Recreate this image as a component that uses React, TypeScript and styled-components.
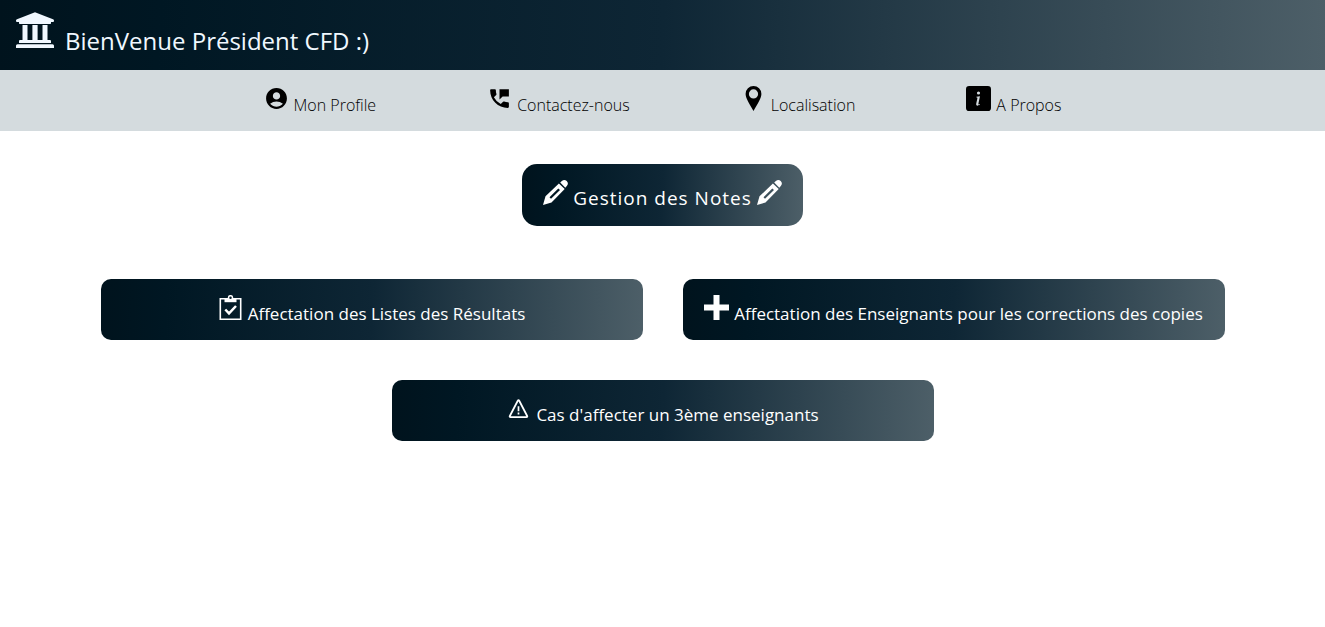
import React from "react";
import styled, { createGlobalStyle } from "styled-components";
import { MdAccountCircle, MdPermPhoneMsg } from "react-icons/md";
import { BsInfoSquareFill } from "react-icons/bs";

const GlobalStyle = createGlobalStyle`
  *, *::before, *::after { box-sizing: border-box; }
  body {
    margin: 0;
    background: #fff;
    color: #001018;
    font-family: "Segoe UI", "Open Sans", "Noto Sans", sans-serif;
  }
`;

const night =
  "linear-gradient(92deg, #00131d 0%, #001723 12%, #0e2635 50%, #4d5f68 100%)";

const Header = styled.header`
  display: flex;
  align-items: flex-start;
  gap: 11px;
  height: 70px;
  padding: 12px 16px;
  background: ${night};
  color: aliceblue;
`;

const Title = styled.h1`
  margin: 0;
  padding-top: 12px;
  font-size: 24px;
  line-height: 34px;
  font-weight: 400;
`;

const Nav = styled.nav`
  display: flex;
  justify-content: center;
  gap: 111px;
  height: 61px;
  padding-top: 16px;
  background: #d4dbde;
`;

const NavLink = styled.a`
  display: flex;
  align-items: flex-start;
  gap: 5px;
  color: #000;
  font-size: 16px;
  line-height: 20px;
  font-weight: 300;
  text-decoration: none;

  span { padding-top: 9px; }
`;

const Main = styled.main`
  display: flex;
  flex-direction: column;
  align-items: center;
  padding: 33px 16px;
`;

const Banner = styled.h2`
  display: flex;
  align-items: flex-start;
  gap: 5px;
  height: 62px;
  margin: 0 0 53px;
  padding: 16px 21px;
  border-radius: 15px;
  background: ${night};
  color: #fff;
  font-size: 19px;
  line-height: 26px;
  font-weight: 400;
  letter-spacing: 1px;

  span { padding-top: 5px; }
`;

const Actions = styled.div`
  display: flex;
  flex-wrap: wrap;
  justify-content: center;
  gap: 40px;
  width: 100%;
`;

const ActionButton = styled.button`
  display: flex;
  justify-content: center;
  align-items: flex-start;
  gap: 5px;
  width: 542px;
  max-width: 100%;
  height: 61px;
  padding: 16px;
  border: 0;
  border-radius: 10px;
  background: ${night};
  color: #fff;
  font-family: inherit;
  font-size: 17px;
  line-height: 24px;
  cursor: pointer;

  span { padding-top: 7px; }
`;

const BankIcon = () => (
  <svg width="38" height="38" viewBox="0 0 38 38" fill="currentColor" aria-hidden="true">
    <path d="M19 0.300L37 7.200q1 .4 1 1.300v.6q0 .9-1 .9H1q-1 0-1-.9v-.6q0-.9 1-1.300z" />
    <path d="M3 9.500h32v1.800q0 .7-.7.700H3.700q-.7 0-.7-.7zM6.500 13h5v15.500h-5zM16.400 13h5.200v15.500h-5.200zM26.500 13h5v15.500h-5zM4 28h30q1 0 1 1v2H3v-2q0-1 1-1zM1.500 32.200h35q1.500 0 1.500 1.500V36H0v-2.300q0-1.500 1.500-1.500z" />
  </svg>
);

const PinIcon = () => (
  <svg width="25" height="25" viewBox="0 0 25 25" fill="currentColor" aria-hidden="true">
    <path fillRule="evenodd" d="M12.500 0a7.900 7.900 0 0 1 7.900 7.900c0 4.600-4.700 11-7.900 17.100c-3.200-6.100-7.900-12.500-7.900-17.100a7.900 7.900 0 0 1 7.900-7.900zm0 3.300a4.600 4.600 0 1 0 0 9.200a4.600 4.600 0 0 0 0-9.200z" />
  </svg>
);

const PencilIcon = () => (
  <svg width="25" height="25" viewBox="0 0 25 25" fill="currentColor" aria-hidden="true">
    <path fillRule="evenodd" d="M15.900 3.500l5.800 5.600L8.500 22.500L0 25l2.500-8.700zM15.300 8.400L6.500 17.200l1.500 1.500L17 9.900z" />
    <path d="M17.200 2.500l1.700-1.500c1.500-1.400 3.500-1.200 4.800 0c1.500 1.500 1.600 3.500.1 5l-1.500 1.700z" />
  </svg>
);

const ClipboardIcon = () => (
  <svg width="25" height="25" viewBox="0 0 25 25" fill="none" stroke="currentColor" aria-hidden="true">
    <path strokeWidth="1.600" d="M2.300 3.700h20.400v20.500H2.300z" />
    <path fill="currentColor" stroke="none" d="M6.500 3.500h12v3.700h-12z" />
    <circle cx="12.500" cy="2.700" r="2" strokeWidth="1.500" fill="#0a202d" />
    <path strokeWidth="2.500" d="M7.300 14.500l3.700 3.900l7-7.400" />
  </svg>
);

const PlusIcon = () => (
  <svg width="25" height="25" viewBox="0 0 25 25" fill="currentColor" aria-hidden="true">
    <path d="M9.500 0h6v9.500H25v6h-9.500V25h-6v-9.500H0v-6h9.500z" />
  </svg>
);

const WarningIcon = () => (
  <svg width="25" height="25" viewBox="0 0 25 25" fill="none" stroke="currentColor" strokeLinejoin="round" aria-hidden="true">
    <path strokeWidth="1.900" d="M11.700 4.900q.8-1.300 1.600 0L21.100 19.900q.5 1.200-.7 1.200H4.600q-1.200 0-.7-1.200z" />
    <path strokeWidth="1.700" d="M12.500 10.300v5M12.500 16.600v1.900" />
  </svg>
);

export default function App() {
  return (
    <>
      <GlobalStyle />
      <Header>
        <BankIcon />
        <Title>BienVenue Président CFD :)</Title>
      </Header>
      <Nav>
        <NavLink href="#profile"><MdAccountCircle size={25} /><span>Mon Profile</span></NavLink>
        <NavLink href="#contact"><MdPermPhoneMsg size={25} /><span>Contactez-nous</span></NavLink>
        <NavLink href="#localisation"><PinIcon /><span>Localisation</span></NavLink>
        <NavLink href="#apropos"><BsInfoSquareFill size={25} /><span>A Propos</span></NavLink>
      </Nav>
      <Main>
        <Banner><PencilIcon /><span>Gestion des Notes</span><PencilIcon /></Banner>
        <Actions>
          <ActionButton type="button"><ClipboardIcon /><span>Affectation des Listes des Résultats</span></ActionButton>
          <ActionButton type="button"><PlusIcon /><span>Affectation des Enseignants pour les corrections des copies</span></ActionButton>
          <ActionButton type="button"><WarningIcon /><span>Cas d'affecter un 3ème enseignants</span></ActionButton>
        </Actions>
      </Main>
    </>
  );
}
